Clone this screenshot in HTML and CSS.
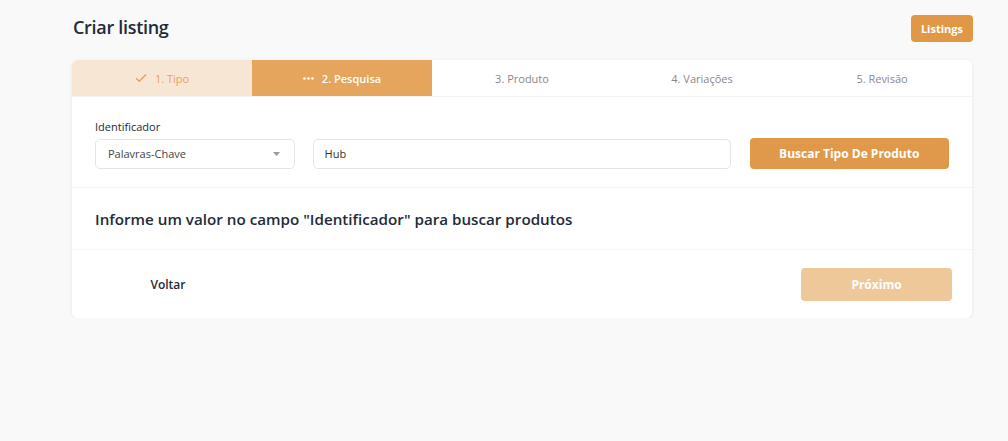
FILE: index.html
```html
<!DOCTYPE html>
<html lang="pt">
<head>
  <meta charset="UTF-8">
  <title>Criar listing</title>
  <link rel="stylesheet" href="styles.css">
</head>
<body>
  <div class="page">
    <div class="topo">
      <h1>Criar listing</h1>
      <button class="btn btn-topo">Listings</button>
    </div>

    <div class="card">
      <div class="passos">
        <div class="passo feito">
          <svg width="12" height="10" viewBox="0 0 12 10"><path d="M1 5.2 L4.3 8.3 L11 1.5" fill="none" stroke="currentColor" stroke-width="1.4"/></svg>
          1. Tipo
        </div>
        <div class="passo ativo">
          <svg width="11" height="3" viewBox="0 0 11 3"><circle cx="1.5" cy="1.5" r="1.3" fill="#fff"/><circle cx="5.5" cy="1.5" r="1.3" fill="#fff"/><circle cx="9.5" cy="1.5" r="1.3" fill="#fff"/></svg>
          2. Pesquisa
        </div>
        <div class="passo">3. Produto</div>
        <div class="passo">4. Variações</div>
        <div class="passo">5. Revisão</div>
      </div>

      <div class="busca">
        <label>Identificador</label>
        <div class="linha">
          <div class="select">
            <span>Palavras-Chave</span>
            <svg width="7" height="4" viewBox="0 0 7 4"><path d="M0 0 L7 0 L3.5 4 Z" fill="#999"/></svg>
          </div>
          <input class="campo" value="Hub">
          <button class="btn btn-buscar">Buscar Tipo De Produto</button>
        </div>
      </div>

      <div class="aviso">Informe um valor no campo "Identificador" para buscar produtos</div>

      <div class="rodape">
        <button class="voltar">Voltar</button>
        <button class="btn btn-proximo">Próximo</button>
      </div>
    </div>
  </div>
</body>
</html>
```

FILE: styles.css
```css
body { margin: 0; background: #f9f9f9; font-family: "Open Sans", "Noto Sans", sans-serif; color: #222b38; }
.page { width: 900px; margin-left: 72px; }
.topo { display: flex; justify-content: space-between; align-items: center; height: 56px; }
h1 { font-size: 18px; font-weight: 600; letter-spacing: -0.3px; margin: 0 0 2px; padding-left: 1px; }
.btn { border: none; border-radius: 4px; color: #fff; font-family: inherit; font-weight: 700; cursor: pointer; }
.btn-topo { background: #e09746; font-size: 11px; padding: 0 10px; height: 27px; margin-right: -1px; }
.card { background: #fff; border-radius: 6px; box-shadow: 0 1px 4px rgba(0,0,0,0.08); margin-top: 4px; overflow: hidden; }
.passos { display: grid; grid-template-columns: repeat(5, 1fr); height: 36px; border-bottom: 1px solid #f3f3f3; }
.passo { display: flex; align-items: center; justify-content: center; gap: 8px; font-size: 11px; color: #888; }
.passo.feito { background: #f8e6d4; color: #e3a25f; }
.passo.ativo { background: #e5a55d; color: #fff; font-weight: 600; }
.busca { padding: 22px 23px 18px; border-bottom: 1px solid #f4f4f4; }
.busca label { display: block; font-size: 11px; margin-bottom: 4px; }
.linha { display: flex; align-items: center; }
.select { width: 200px; height: 30px; box-sizing: border-box; border: 1px solid #e2e4ea; border-radius: 5px; display: flex; align-items: center; justify-content: space-between; padding: 0 14px 0 12px; font-size: 11px; color: #444; }
.campo { width: 419px; height: 30px; box-sizing: border-box; border: 1px solid #e2e4ea; border-radius: 5px; margin-left: 18px; padding: 0 11px; font-family: inherit; font-size: 11px; color: #333; }
.btn-buscar { background: #e0984a; font-size: 12px; height: 31px; width: 200px; margin-left: 19px; }
.aviso { padding: 20px 23px 19px; font-size: 15.2px; font-weight: 600; border-bottom: 1px solid #f6f6f6; height: 22px; line-height: 22px; }
.rodape { display: flex; justify-content: space-between; align-items: center; padding: 18px 20px 17px 23px; }
.voltar { background: none; border: none; padding: 0; font-family: inherit; font-size: 12px; font-weight: 600; color: #222b38; width: 146px; height: 33px; }
.btn-proximo { background: #efc899; font-size: 12px; width: 151px; height: 33px; }
```
